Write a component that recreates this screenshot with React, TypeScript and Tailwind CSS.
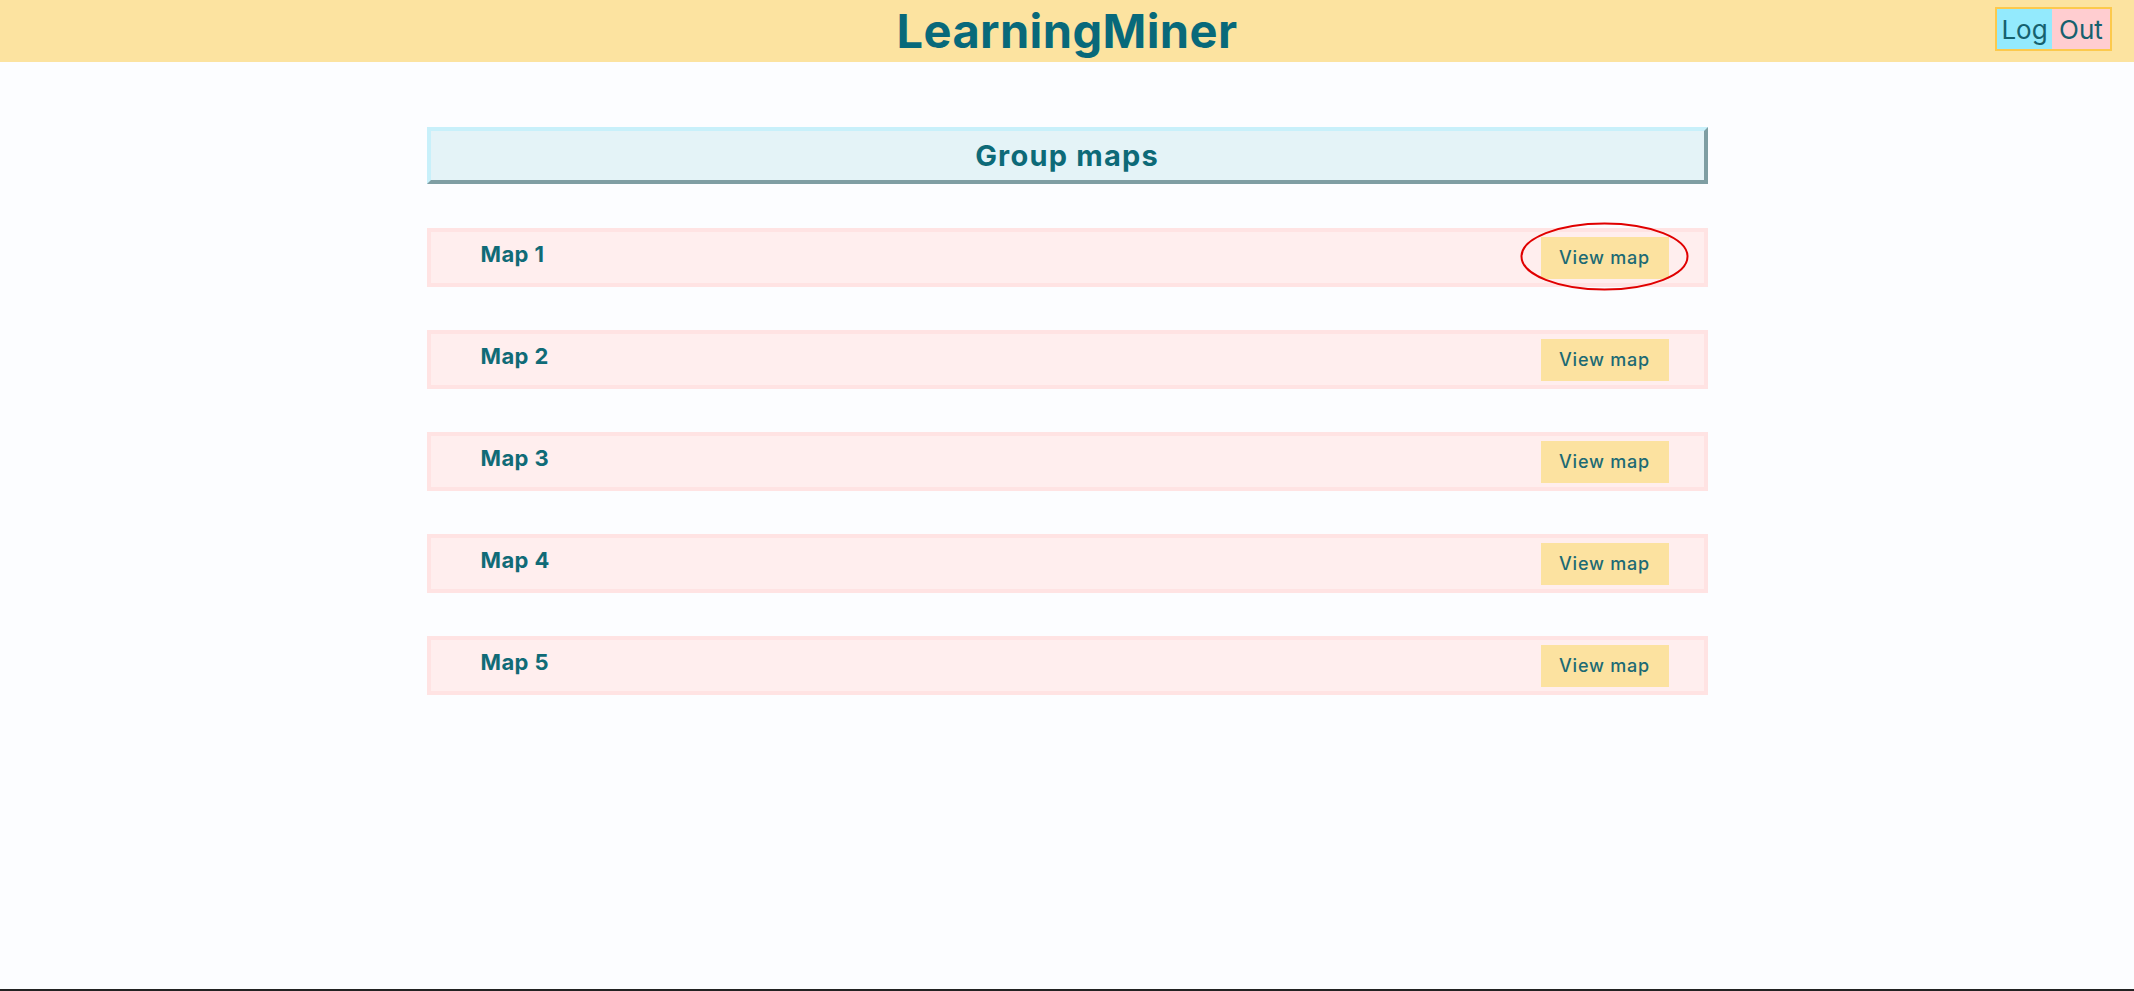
const maps = ['Map 1', 'Map 2', 'Map 3', 'Map 4', 'Map 5']

const font = { fontFamily: '"Inter", "Liberation Sans", sans-serif' }

function MapRow({ name, circled }: { name: string; circled?: boolean }) {
  return (
    <div className="relative flex h-[59px] items-center justify-between border-4 border-[#ffe3e3] bg-[#ffeeee] pl-[50px] pr-[35px]">
      <span className="-mt-[6px] text-[22px] font-bold tracking-[0.4px] text-[#106b77]">{name}</span>
      <button className="flex h-[42px] w-[128px] items-center justify-center bg-[#fce2a0] text-[18px] font-medium tracking-[0.8px] text-[#1c6a74]">
        View map
      </button>
      {circled && (
        <svg className="absolute right-[15px] top-[-10px] h-[69px] w-[169px]" viewBox="0 0 169 69">
          <ellipse cx="84.5" cy="34.5" rx="83" ry="33" fill="none" stroke="#e00000" strokeWidth="2" />
        </svg>
      )}
    </div>
  )
}

export default function App() {
  return (
    <div className="flex h-screen flex-col bg-[#fcfdff]" style={font}>
      <header className="relative flex h-[62px] items-center justify-center bg-[#fce3a0]">
        <h1 className="text-[47px] font-bold tracking-[0.4px] text-[#08697a]">LearningMiner</h1>
        <div className="absolute right-[22px] top-[7px] flex h-[44px] border-2 border-[#fcc94c] text-[26px] text-[#15616f]">
          <span className="flex w-[55px] items-center justify-center bg-[#93eafd]">Log</span>
          <span className="flex w-[58px] items-center justify-center bg-[#ffcdd0]">Out</span>
        </div>
      </header>

      <main className="mx-auto mt-[65px] flex w-[1281px] flex-col gap-[43px]">
        <div className="mb-[1px] flex h-[57px] items-center justify-center border-4 border-t-[#c8f0fa] border-l-[#c8f0fa] border-b-[#7f9ea3] border-r-[#7f9ea3] bg-[#e4f3f7]">
          <h2 className="text-[29px] font-bold tracking-[1.2px] text-[#0d6a78]">Group maps</h2>
        </div>
        {maps.map((m, i) => (
          <MapRow key={m} name={m} circled={i === 0} />
        ))}
      </main>

      <div className="mt-auto h-[2px] bg-[#222]" />
    </div>
  )
}
